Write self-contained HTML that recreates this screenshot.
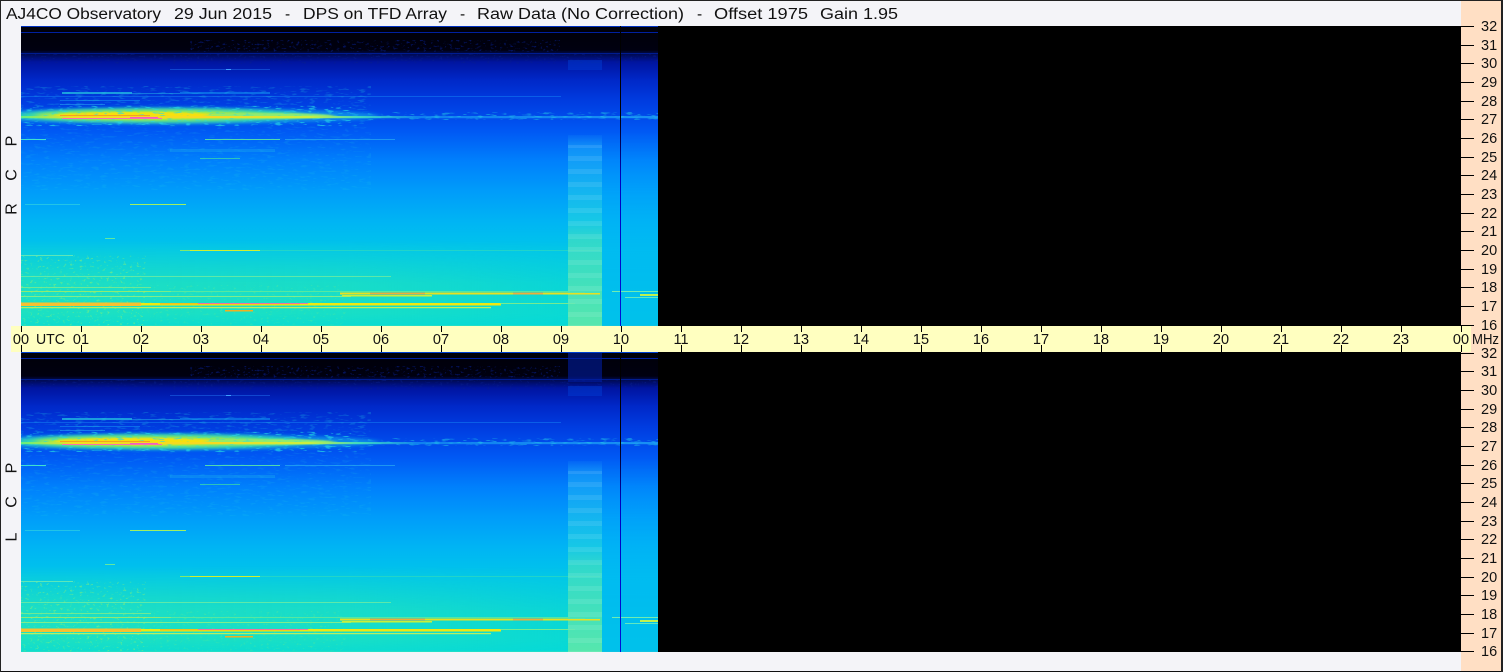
<!DOCTYPE html>
<html><head><meta charset="utf-8"><title>AJ4CO Observatory</title>
<style>html,body{margin:0;padding:0;background:#f4f4f8;overflow:hidden}svg{display:block}
text{font-family:"Liberation Sans",Arial,sans-serif;font-size:14.5px;fill:#111}</style></head>
<body>
<svg xmlns="http://www.w3.org/2000/svg" width="1503" height="672" viewBox="0 0 1503 672">
<defs>
<clipPath id="cp"><rect x="21" y="26" width="637" height="300"/></clipPath>
<linearGradient id="v" gradientUnits="userSpaceOnUse" x1="0" y1="26" x2="0" y2="326">
<stop offset="0" stop-color="#000008"/><stop offset=".08" stop-color="#000010"/><stop offset=".093" stop-color="#000a50"/><stop offset=".12" stop-color="#0014a0"/><stop offset=".18" stop-color="#0028c8"/><stop offset=".25" stop-color="#003ce0"/><stop offset=".35" stop-color="#0058f4"/><stop offset=".45" stop-color="#0080fc"/><stop offset=".55" stop-color="#009cfa"/><stop offset=".65" stop-color="#00b4f4"/><stop offset=".75" stop-color="#00c6ea"/><stop offset=".88" stop-color="#00d2e0"/><stop offset="1" stop-color="#00d8dc"/>
</linearGradient>
<linearGradient id="gl" gradientUnits="userSpaceOnUse" x1="21" y1="0" x2="568" y2="0"><stop offset="0" stop-color="#30e8b0" stop-opacity=".6"/><stop offset=".6" stop-color="#30e8b0" stop-opacity=".5"/><stop offset="1" stop-color="#30e8b0" stop-opacity=".2"/></linearGradient>
<linearGradient id="fade" gradientUnits="userSpaceOnUse" x1="0" y1="240" x2="0" y2="326"><stop offset="0" stop-color="#fff" stop-opacity="0"/><stop offset=".5" stop-color="#fff"/><stop offset=".85" stop-color="#fff"/><stop offset="1" stop-color="#fff" stop-opacity=".5"/></linearGradient>
<mask id="fm"><rect x="21" y="240" width="640" height="86" fill="url(#fade)"/></mask>
<linearGradient id="bf" gradientUnits="userSpaceOnUse" x1="0" y1="130" x2="0" y2="270"><stop offset="0" stop-color="#000"/><stop offset="1" stop-color="#fff"/></linearGradient>
<mask id="bm"><rect x="600" y="130" width="60" height="200" fill="url(#bf)"/></mask>
<linearGradient id="col" gradientUnits="userSpaceOnUse" x1="0" y1="135" x2="0" y2="326"><stop offset="0" stop-color="#20a8f8" stop-opacity=".1"/><stop offset=".06" stop-color="#20b0f8" stop-opacity=".5"/><stop offset=".45" stop-color="#20d0e0" stop-opacity=".7"/><stop offset=".55" stop-color="#40e0c0" stop-opacity=".75"/><stop offset="1" stop-color="#60e8a8" stop-opacity=".9"/></linearGradient>
<linearGradient id="lv" gradientUnits="userSpaceOnUse" x1="0" y1="26" x2="0" y2="326"><stop offset="0" stop-color="#000"/><stop offset=".3" stop-color="#000"/><stop offset=".5" stop-color="#0000c0"/><stop offset="1" stop-color="#0010d8"/></linearGradient>
<linearGradient id="main" gradientUnits="userSpaceOnUse" x1="21" y1="0" x2="660" y2="0"><stop offset="0" stop-color="#60f080"/><stop offset=".08" stop-color="#f0e020"/><stop offset=".3" stop-color="#f8d820"/><stop offset=".45" stop-color="#c8f040"/><stop offset=".53" stop-color="#40d8c0"/><stop offset=".62" stop-color="#1080f0"/><stop offset="1" stop-color="#1890f4"/></linearGradient>
<pattern id="stripes" patternUnits="userSpaceOnUse" width="34" height="13"><rect width="34" height="5" fill="#fff" opacity=".09"/></pattern>
<filter id="b4" x="-20%" y="-200%" width="140%" height="500%"><feGaussianBlur stdDeviation="4 1.600"/></filter>
<filter id="b2" x="-20%" y="-200%" width="140%" height="500%"><feGaussianBlur stdDeviation="3 .8"/></filter>
<filter id="sp" x="0" y="0" width="100%" height="100%" color-interpolation-filters="sRGB"><feTurbulence type="fractalNoise" baseFrequency=".3 .5" numOctaves="2" seed="7"/><feColorMatrix values="0 0 0 0 .55  0 0 0 0 .95  0 0 0 0 .45  7 0 0 0 -4.400"/></filter>
<filter id="sb" x="0" y="0" width="100%" height="100%" color-interpolation-filters="sRGB"><feTurbulence type="fractalNoise" baseFrequency=".12 .55" numOctaves="2" seed="3"/><feColorMatrix values="0 0 0 0 .15  0 0 0 0 .85  0 0 0 0 .9  7 0 0 0 -4"/></filter>
<filter id="sd" x="0" y="0" width="100%" height="100%" color-interpolation-filters="sRGB"><feTurbulence type="fractalNoise" baseFrequency=".3 .5" numOctaves="2" seed="11"/><feColorMatrix values="0 0 0 0 .03  0 0 0 0 .12  0 0 0 0 .55  7 0 0 0 -4.200"/></filter>
<g id="spec"><g clip-path="url(#cp)">
<rect x="21" y="26" width="637" height="300" fill="url(#v)"/>
<rect x="21" y="240" width="547" height="86" fill="url(#gl)" mask="url(#fm)"/>
<rect x="21" y="26" width="637" height="1" fill="#0030c0"/>
<rect x="21" y="32" width="637" height="1" fill="#0020a0"/>
<rect x="21" y="53" width="637" height="1" fill="#001c90"/>
<rect x="190" y="40" width="370" height="12" filter="url(#sd)" opacity=".6"/>
<rect x="21" y="54" width="637" height="10" filter="url(#sd)" opacity=".5"/>
<rect x="170" y="69" width="100" height="1" fill="#2070f0" opacity=".5"/>
<rect x="226" y="69" width="5" height="1" fill="#40a0ff"/>
<rect x="21" y="96" width="540" height="1" fill="#1078f0" opacity=".6"/>
<rect x="62" y="92" width="70" height="2" fill="#20b8e0" opacity=".8"/>
<rect x="120" y="93" width="60" height="1" fill="#20a0e8" opacity=".6"/>
<rect x="180" y="92" width="90" height="2" fill="#1090f0" opacity=".6"/>
<rect x="60" y="100" width="80" height="1" fill="#1080f0" opacity=".7"/><rect x="60" y="104" width="45" height="1" fill="#2090f0" opacity=".7"/>
<rect x="21" y="86" width="350" height="40" filter="url(#sb)" opacity=".22"/>
<ellipse cx="170" cy="116" rx="210" ry="8" fill="#1090e8" filter="url(#b4)" opacity=".9"/>
<ellipse cx="160" cy="115.500" rx="145" ry="7.500" fill="#30d8b0" filter="url(#b4)"/>
<ellipse cx="150" cy="115.500" rx="115" ry="5" fill="#b0ec40" filter="url(#b4)"/>
<ellipse cx="135" cy="115.500" rx="80" ry="3.500" fill="#f8e010" filter="url(#b2)"/>
<ellipse cx="270" cy="116" rx="65" ry="3" fill="#90ec70" filter="url(#b2)"/>
<rect x="21" y="106" width="330" height="20" filter="url(#sb)" opacity=".6"/>
<rect x="21" y="116" width="639" height="2.200" fill="url(#main)"/>
<rect x="60" y="115" width="90" height="1" fill="#f8a020"/>
<rect x="62" y="118" width="100" height="1" fill="#f870b0"/>
<rect x="130" y="117" width="28" height="1" fill="#f060c0"/>
<rect x="350" y="112" width="310" height="8" filter="url(#sb)" opacity=".45"/>
<rect x="21" y="139" width="25" height="1" fill="#40e0d0"/>
<rect x="205" y="139" width="75" height="1" fill="#50d8b0"/><rect x="285" y="139" width="110" height="1" fill="#30b8f0" opacity=".6"/>
<rect x="170" y="149" width="105" height="3" fill="#1098f0" opacity=".55"/>
<rect x="200" y="158" width="40" height="1" fill="#40e0a0" opacity=".7"/>
<rect x="21" y="125" width="350" height="65" filter="url(#sb)" opacity=".12"/>
<rect x="25" y="204" width="55" height="1" fill="#30d0e0" opacity=".7"/><rect x="130" y="204" width="56" height="1" fill="#a0f060"/>
<rect x="105" y="238" width="10" height="1" fill="#60e8a0"/>
<rect x="21" y="255" width="52" height="1" fill="#70ecb0" opacity=".8"/>
<rect x="180" y="250" width="60" height="1" fill="#a0f050" opacity=".8"/><rect x="190" y="250" width="70" height="1" fill="#d0f030"/><rect x="260" y="250" width="340" height="1" fill="#40e0b0" opacity=".5"/>
<rect x="21" y="255" width="125" height="71" filter="url(#sp)" opacity=".55"/>
<rect x="146" y="285" width="200" height="41" filter="url(#sp)" opacity=".22"/>
<rect x="21" y="276" width="370" height="1" fill="#70eca0" opacity=".8"/>
<rect x="21" y="287" width="130" height="1" fill="#90f080" opacity=".7"/>
<rect x="21" y="291" width="150" height="1" fill="#c0f050" opacity=".7"/>
<rect x="160" y="291" width="410" height="1" fill="#70ec90" opacity=".7"/>
<rect x="340" y="292.500" width="245" height="2" fill="#e8e020"/>
<rect x="370" y="292.500" width="55" height="2" fill="#f0a040" opacity=".8"/>
<rect x="513" y="292.500" width="30" height="2" fill="#f0a040" opacity=".8"/>
<rect x="21" y="296" width="330" height="1" fill="#90f080" opacity=".85"/>
<rect x="342" y="295" width="90" height="1.500" fill="#c8f038"/>
<rect x="21" y="303" width="480" height="2.500" fill="#f0e810"/>
<rect x="21" y="302.500" width="120" height="3.500" fill="#f8c030"/>
<rect x="160" y="303" width="140" height="1.500" fill="#f0b020" opacity=".7"/>
<rect x="198" y="303" width="110" height="1" fill="#f060c0" opacity=".8"/>
<rect x="500" y="303" width="75" height="1" fill="#90f080" opacity=".8"/>
<rect x="21" y="307" width="470" height="1.200" fill="#b8f060"/>
<rect x="225" y="310" width="28" height="1.500" fill="#f0b020"/>
<rect x="21" y="325" width="637" height="1" fill="#30e0c0" opacity=".6"/>
<rect x="602" y="130" width="56" height="196" fill="#00b0f8" opacity=".55" mask="url(#bm)"/>
<rect x="568" y="60" width="34" height="10" fill="#0040d8" opacity=".45"/>
<rect x="568" y="135" width="34" height="191" fill="url(#col)"/>
<rect x="568" y="145" width="34" height="181" fill="url(#stripes)"/>
<rect x="568" y="293" width="32" height="1.500" fill="#e8e020"/>
<rect x="612" y="291" width="46" height="1" fill="#70ecb0"/><rect x="640" y="294" width="18" height="2" fill="#c0f050"/><rect x="625" y="297" width="33" height="1" fill="#60e8c0"/>
<rect x="620" y="26" width="1" height="300" fill="url(#lv)"/>
</g></g>
</defs>
<rect width="1503" height="672" fill="#f4f4f8"/>
<rect x="1461" y="0" width="40" height="672" fill="#ffdfc4"/>
<rect x="21" y="26" width="1440" height="300" fill="#000"/>
<rect x="21" y="352" width="1440" height="300" fill="#000"/>
<use href="#spec"/>
<use href="#spec" transform="translate(0,326)"/>
<rect x="568" y="352" width="34" height="30" fill="#001ca0" opacity=".6"/>
<rect x="11" y="326" width="1460" height="26" fill="#ffffc0"/>
<rect x="21" y="352" width="637" height="1" fill="#0040d0"/>
<!-- borders -->
<rect x="0" y="0" width="1503" height="1" fill="#222"/><rect x="0" y="671" width="1503" height="1" fill="#111"/>
<rect x="0" y="0" width="1" height="672" fill="#222"/><rect x="1501" y="0" width="2" height="672" fill="#222"/>
<!-- title -->
<g>
<text style="font-size:15.5px" x="6" y="19" textLength="155" lengthAdjust="spacingAndGlyphs">AJ4CO Observatory</text>
<text style="font-size:15.5px" x="174" y="19" textLength="98" lengthAdjust="spacingAndGlyphs">29 Jun 2015</text>
<text style="font-size:15.5px" x="285" y="19">-</text>
<text style="font-size:15.5px" x="303" y="19" textLength="144" lengthAdjust="spacingAndGlyphs">DPS on TFD Array</text>
<text style="font-size:15.5px" x="460" y="19">-</text>
<text style="font-size:15.5px" x="477" y="19" textLength="207" lengthAdjust="spacingAndGlyphs">Raw Data (No Correction)</text>
<text style="font-size:15.5px" x="697" y="19">-</text>
<text style="font-size:15.5px" x="714" y="19" textLength="94" lengthAdjust="spacingAndGlyphs">Offset 1975</text>
<text style="font-size:15.5px" x="820" y="19" textLength="78" lengthAdjust="spacingAndGlyphs">Gain 1.95</text>
</g>
<!-- polarisation labels -->
<g text-anchor="middle">
<text style="font-size:16px" transform="translate(16.500,209) rotate(-90)">R</text>
<text style="font-size:16px" transform="translate(16.500,175) rotate(-90)">C</text>
<text style="font-size:16px" transform="translate(16.500,141) rotate(-90)">P</text>
<text style="font-size:16px" transform="translate(16.500,537) rotate(-90)">L</text>
<text style="font-size:16px" transform="translate(16.500,502) rotate(-90)">C</text>
<text style="font-size:16px" transform="translate(16.500,468) rotate(-90)">P</text>
</g>
<!-- time ticks -->
<path stroke="#000" stroke-width="1" d="M21.500 326v6M21.500 345v7M81.500 326v6M81.500 345v7M141.500 326v6M141.500 345v7M201.500 326v6M201.500 345v7M261.500 326v6M261.500 345v7M321.500 326v6M321.500 345v7M381.500 326v6M381.500 345v7M441.500 326v6M441.500 345v7M501.500 326v6M501.500 345v7M561.500 326v6M561.500 345v7M621.500 326v6M621.500 345v7M681.500 326v6M681.500 345v7M741.500 326v6M741.500 345v7M801.500 326v6M801.500 345v7M861.500 326v6M861.500 345v7M921.500 326v6M921.500 345v7M981.500 326v6M981.500 345v7M1041.500 326v6M1041.500 345v7M1101.500 326v6M1101.500 345v7M1161.500 326v6M1161.500 345v7M1221.500 326v6M1221.500 345v7M1281.500 326v6M1281.500 345v7M1341.500 326v6M1341.500 345v7M1401.500 326v6M1401.500 345v7M1461.500 326v6M1461.500 345v7"/>
<g text-anchor="middle">
<text x="21" y="344">00</text><text x="81" y="344">01</text><text x="141" y="344">02</text><text x="201" y="344">03</text><text x="261" y="344">04</text><text x="321" y="344">05</text><text x="381" y="344">06</text><text x="441" y="344">07</text><text x="501" y="344">08</text><text x="561" y="344">09</text><text x="621" y="344">10</text><text x="681" y="344">11</text><text x="741" y="344">12</text><text x="801" y="344">13</text><text x="861" y="344">14</text><text x="921" y="344">15</text><text x="981" y="344">16</text><text x="1041" y="344">17</text><text x="1101" y="344">18</text><text x="1161" y="344">19</text><text x="1221" y="344">20</text><text x="1281" y="344">21</text><text x="1341" y="344">22</text><text x="1401" y="344">23</text><text x="1461" y="344">00</text>
</g>
<text x="36" y="344" textLength="29" lengthAdjust="spacingAndGlyphs">UTC</text>
<text x="1472" y="344" textLength="27" lengthAdjust="spacingAndGlyphs">MHz</text>
<!-- frequency ticks -->
<path stroke="#000" stroke-width="1" d="M1461 26.500h13M1461 45.500h13M1461 63.500h13M1461 82.500h13M1461 101.500h13M1461 119.500h13M1461 138.500h13M1461 157.500h13M1461 175.500h13M1461 194.500h13M1461 213.500h13M1461 231.500h13M1461 250.500h13M1461 269.500h13M1461 287.500h13M1461 306.500h13M1461 325.500h13M1461 353.500h13M1461 371.500h13M1461 390.500h13M1461 409.500h13M1461 427.500h13M1461 446.500h13M1461 465.500h13M1461 483.500h13M1461 502.500h13M1461 521.500h13M1461 539.500h13M1461 558.500h13M1461 577.500h13M1461 595.500h13M1461 614.500h13M1461 633.500h13M1461 651.500h13"/>
<g>
<text x="1481" y="31">32</text><text x="1481" y="50">31</text><text x="1481" y="68">30</text><text x="1481" y="87">29</text><text x="1481" y="106">28</text><text x="1481" y="124">27</text><text x="1481" y="143">26</text><text x="1481" y="162">25</text><text x="1481" y="180">24</text><text x="1481" y="199">23</text><text x="1481" y="218">22</text><text x="1481" y="236">21</text><text x="1481" y="255">20</text><text x="1481" y="274">19</text><text x="1481" y="292">18</text><text x="1481" y="311">17</text><text x="1481" y="330">16</text>
<text x="1481" y="358">32</text><text x="1481" y="376">31</text><text x="1481" y="395">30</text><text x="1481" y="414">29</text><text x="1481" y="432">28</text><text x="1481" y="451">27</text><text x="1481" y="470">26</text><text x="1481" y="488">25</text><text x="1481" y="507">24</text><text x="1481" y="526">23</text><text x="1481" y="544">22</text><text x="1481" y="563">21</text><text x="1481" y="582">20</text><text x="1481" y="600">19</text><text x="1481" y="619">18</text><text x="1481" y="638">17</text><text x="1481" y="656">16</text>
</g>
</svg>
</body></html>
